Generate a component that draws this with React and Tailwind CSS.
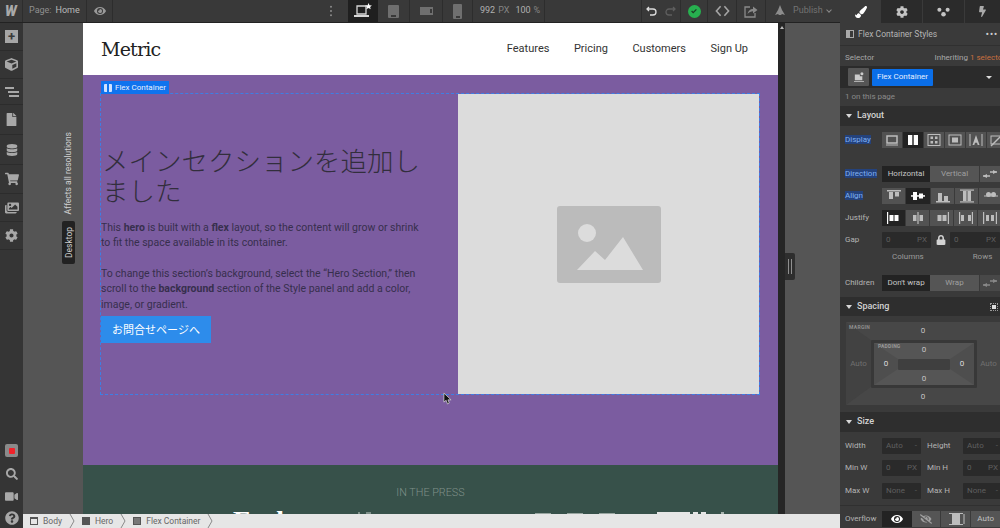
import React from "react";
import {
  FaBolt,
  FaCog,
  FaCube,
  FaDatabase,
  FaEye,
  FaEyeSlash,
  FaFile,
  FaImages,
  FaLock,
  FaPaintBrush,
  FaQuestionCircle,
  FaSearch,
  FaShoppingCart,
  FaVideo,
} from "react-icons/fa";

// little pictograms used on the style panel buttons, all on a 20x16 grid
const glyphs = {
  block: <><rect x="5" y="4" width="10" height="7" fill="none" stroke="currentColor" strokeWidth="1.5" /><rect x="4" y="12.500" width="12" height="1" fill="currentColor" /></>,
  flex: <><rect x="5" y="3" width="10" height="10" fill="currentColor" /><rect x="9.3" y="3" width="1.4" height="10" fill="#222" /></>,
  grid: <><rect x="4" y="2.5" width="12" height="11" fill="none" stroke="currentColor" /><rect x="6.5" y="4.5" width="2.5" height="2.5" fill="currentColor" /><rect x="11" y="4.5" width="2.5" height="2.5" fill="currentColor" /><rect x="6.5" y="9" width="2.5" height="2.5" fill="currentColor" /><rect x="11" y="9" width="2.5" height="2.5" fill="currentColor" /></>,
  inlineBlock: <><rect x="4" y="3" width="12" height="10" fill="none" stroke="currentColor" /><rect x="7" y="5.5" width="6" height="5" fill="currentColor" /></>,
  text: <><rect x="3.5" y="2" width="1" height="12" fill="currentColor" /><rect x="15.5" y="2" width="1" height="12" fill="currentColor" /><path d="M10 3l3.5 10h-1.800l-.7-2.200H9l-.7 2.200H6.500z" fill="currentColor" /></>,
  none: <><rect x="4" y="4" width="12" height="8" fill="none" stroke="currentColor" /><path d="M4 14L16 2" stroke="currentColor" strokeWidth="1.500" /></>,
  swap: <><path d="M3 10h7M10 6h7" stroke="currentColor" strokeWidth="1.500" /><path d="M7 12l-4-2 4-2zM13 8l4-2-4-2z" fill="currentColor" /></>,
  alignTop: <><rect x="3" y="2" width="14" height="1.500" fill="currentColor" /><rect x="5" y="4" width="4" height="7" fill="currentColor" /><rect x="11" y="4" width="4" height="4.500" fill="currentColor" /></>,
  alignCenter: <><rect x="3" y="7.200" width="14" height="1.500" fill="currentColor" /><rect x="5" y="4" width="4" height="8" fill="currentColor" /><rect x="11" y="5.500" width="4" height="5" fill="currentColor" /></>,
  alignBottom: <><rect x="3" y="13" width="14" height="1.500" fill="currentColor" /><rect x="5" y="5" width="4" height="8" fill="currentColor" /><rect x="11" y="8" width="4" height="5" fill="currentColor" /></>,
  alignStretch: <><rect x="3" y="1.500" width="14" height="1.200" fill="currentColor" /><rect x="3" y="13.300" width="14" height="1.200" fill="currentColor" /><rect x="6" y="3" width="3.500" height="10" fill="currentColor" /><rect x="10.500" y="3" width="3.500" height="10" fill="currentColor" /></>,
  alignBase: <><rect x="3" y="7.500" width="14" height="1" fill="currentColor" /><circle cx="7.500" cy="6.500" r="2.500" fill="currentColor" /><circle cx="12.500" cy="6.500" r="2.500" fill="currentColor" /></>,
  justStart: <><rect x="3" y="2" width="1.200" height="12" fill="currentColor" /><rect x="5.500" y="5" width="4" height="6" fill="currentColor" /><rect x="10.500" y="5" width="4" height="6" fill="currentColor" /></>,
  justCenter: <><rect x="9.400" y="2" width="1.200" height="12" fill="currentColor" /><rect x="5" y="5" width="3.500" height="6" fill="currentColor" /><rect x="11.500" y="5" width="3.500" height="6" fill="currentColor" /></>,
  justEnd: <><rect x="15.800" y="2" width="1.200" height="12" fill="currentColor" /><rect x="5.500" y="5" width="4" height="6" fill="currentColor" /><rect x="10.500" y="5" width="4" height="6" fill="currentColor" /></>,
  justBetween: <><rect x="3" y="2" width="1.200" height="12" fill="currentColor" /><rect x="15.800" y="2" width="1.200" height="12" fill="currentColor" /><rect x="5" y="5" width="3" height="6" fill="currentColor" /><rect x="12" y="5" width="3" height="6" fill="currentColor" /></>,
  justAround: <><rect x="3" y="2" width="1.200" height="12" fill="currentColor" /><rect x="15.800" y="2" width="1.200" height="12" fill="currentColor" /><rect x="6" y="5" width="3" height="6" fill="currentColor" /><rect x="11" y="5" width="3" height="6" fill="currentColor" /></>,
  clip: <><rect x="6" y="3" width="8" height="10" fill="currentColor" /><rect x="3" y="2" width="14" height="1" fill="currentColor" /><rect x="3" y="13" width="14" height="1" fill="currentColor" /><path d="M18 3v10" stroke="currentColor" /></>,
};

function Glyph({ name, className = "h-4 w-5" }) {
  return (
    <svg viewBox="0 0 20 16" className={className}>
      {glyphs[name]}
    </svg>
  );
}

function IconButton({ name, active, width = "w-[20px]" }) {
  return (
    <div
      className={`flex h-4 shrink-0 items-center justify-center ${width} ${
        active ? "bg-[#232323] text-white" : "bg-[#525252] text-[#bdbdbd]"
      }`}
    >
      <Glyph name={name} />
    </div>
  );
}

function Row({ label, highlight, className = "", children }) {
  return (
    <div className={`flex h-4 items-center pl-[5px] ${className}`}>
      <div className="w-[37px] shrink-0">
        <span
          className={
            highlight
              ? "bg-[#24427c] text-[#7fb0f2]"
              : "text-[#b4b4b4]"
          }
        >
          {label}
        </span>
      </div>
      {children}
    </div>
  );
}

function SectionHeader({ title, height, right }) {
  return (
    <div
      className={`flex shrink-0 items-center justify-between bg-[#2e2e2e] pl-[6px] pr-[2px] text-[9px] font-medium text-[#d2d2d2] ${height}`}
    >
      <div className="flex items-center gap-[5px]">
        <span className="h-0 w-0 border-x-[3px] border-t-[4px] border-x-transparent border-t-[#d8d8d8]" />
        {title}
      </div>
      {right}
    </div>
  );
}

function SizeInput({ value, unit, width = "w-[39px]" }) {
  return (
    <div className={`flex h-4 shrink-0 items-center justify-between rounded-[1px] bg-[#2a2a2a] px-[4px] text-[#5f5f5f] ${width}`}>
      <span>{value}</span>
      <span>{unit}</span>
    </div>
  );
}

function SizeRow({ left, right, value, unit }) {
  return (
    <div className="flex h-4 items-center pl-[5px] text-[#b4b4b4]">
      <div className="w-[37px] shrink-0">{left}</div>
      <SizeInput value={value} unit={unit} />
      <div className="ml-[6px] w-[36px] shrink-0">{right}</div>
      <SizeInput value={value} unit={unit} />
    </div>
  );
}

function TopBar() {
  return (
    <div className="flex h-[23px] shrink-0 items-stretch border-b border-[#222] bg-[#393939] text-[9px] text-[#bdbdbd]">
      <div className="flex w-[23px] items-center justify-center border-r border-[#2d2d2d] text-[14px] font-black italic text-[#a9a9a9]">
        W
      </div>
      <div className="flex w-[64px] items-center border-r border-[#2d2d2d] pl-[6px]">
        <span className="text-[#8f8f8f]">Page:</span>
        <span className="ml-[4px] text-[#b9b9b9]">Home</span>
      </div>
      <div className="flex w-[26px] items-center justify-center border-r border-[#2d2d2d] text-[#9a9a9a]">
        <FaEye size={12} />
      </div>
      <div className="flex flex-1 items-center justify-end pr-[15px] text-[#8a8a8a]">
        <svg viewBox="0 0 4 14" className="h-[12px] w-[4px]">
          <circle cx="2" cy="2" r="1.200" fill="currentColor" />
          <circle cx="2" cy="7" r="1.200" fill="currentColor" />
          <circle cx="2" cy="12" r="1.200" fill="currentColor" />
        </svg>
      </div>
      <div className="flex w-[30px] items-center justify-center bg-[#1f1f1f] text-[#d6d6d6]">
        <svg viewBox="0 0 20 16" className="h-[16px] w-[20px]">
          <path d="M4 3h9v8H4z" fill="none" stroke="currentColor" strokeWidth="1.300" />
          <rect x="1" y="12" width="15" height="2" fill="currentColor" />
          <path d="M15.500 0l1 2.200 2.400.2-1.800 1.600.6 2.300-2.200-1.200-2.100 1.200.6-2.300-1.800-1.600 2.400-.2z" fill="#fff" />
        </svg>
      </div>
      <div className="flex w-[32px] items-center justify-center border-r border-[#2d2d2d] text-[#6f6f6f]">
        <div className="flex h-[13px] w-[11px] flex-col justify-end rounded-[1px] bg-[#6f6f6f] pb-[1px]">
          <div className="mx-auto h-[2px] w-[5px] bg-[#393939]" />
        </div>
      </div>
      <div className="flex w-[33px] items-center justify-center border-r border-[#2d2d2d]">
        <div className="flex h-[8px] w-[13px] items-center justify-end bg-[#6f6f6f] pr-[1px]">
          <div className="h-[4px] w-[2px] bg-[#393939]" />
        </div>
      </div>
      <div className="flex w-[30px] items-center justify-center border-r border-[#2d2d2d]">
        <div className="flex h-[15px] w-[9px] flex-col justify-end rounded-[1px] bg-[#6f6f6f] pb-[1px]">
          <div className="mx-auto h-[2px] w-[4px] bg-[#393939]" />
        </div>
      </div>
      <div className="flex w-[72px] items-center border-r border-[#2d2d2d] pl-[7px]">
        <span className="text-[#b0b0b0]">992</span>
        <span className="ml-[3px] text-[#858585]">PX</span>
        <span className="ml-[6px] text-[#b0b0b0]">100</span>
        <span className="ml-[3px] text-[#858585]">%</span>
      </div>
      <div className="w-[96px]" />
      <div className="flex w-[40px] items-center justify-center gap-[6px] border-x border-[#2d2d2d]">
        <svg viewBox="0 0 12 10" className="h-[10px] w-[12px] text-[#dcdcdc]">
          <path d="M3 1L1 3l2 2M1 3h6a3 3 0 010 6H4" fill="none" stroke="currentColor" strokeWidth="1.300" />
        </svg>
        <svg viewBox="0 0 12 10" className="h-[10px] w-[12px] text-[#5e5e5e]">
          <path d="M9 1l2 2-2 2M11 3H5a3 3 0 000 6h3" fill="none" stroke="currentColor" strokeWidth="1.300" />
        </svg>
      </div>
      <div className="flex w-[27px] items-center justify-center border-r border-[#2d2d2d]">
        <div className="flex h-[13px] w-[13px] items-center justify-center rounded-full bg-[#27b04f]">
          <svg viewBox="0 0 10 10" className="h-[8px] w-[8px]">
            <path d="M2 5l2 2 4-4" fill="none" stroke="#1c3b24" strokeWidth="1.600" />
          </svg>
        </div>
      </div>
      <div className="flex w-[29px] items-center justify-center border-r border-[#2d2d2d] text-[#a5a5a5]">
        <svg viewBox="0 0 16 12" className="h-[12px] w-[15px]">
          <path d="M6 1L1.500 6 6 11M10 1l4.500 5L10 11" fill="none" stroke="currentColor" strokeWidth="1.700" />
        </svg>
      </div>
      <div className="flex w-[29px] items-center justify-center border-r border-[#2d2d2d] text-[#8a8a8a]">
        <svg viewBox="0 0 14 13" className="h-[13px] w-[14px]">
          <path d="M6 2H1v10h10V8" fill="none" stroke="currentColor" strokeWidth="1.300" />
          <path d="M3.500 9c.5-3 2.500-5 5.500-5V1.500L13.500 5 9 8.500V6.300c-2 0-4 1-5.500 2.700z" fill="currentColor" />
        </svg>
      </div>
      <div className="flex w-[74px] items-center pl-[8px] text-[#737373]">
        <svg viewBox="0 0 12 12" className="h-[12px] w-[12px] text-[#8c8c8c]">
          <path d="M6 0l2 5 3 5-3-1-1 1H5L4 9l-3 1 3-5z" fill="currentColor" />
        </svg>
        <span className="ml-[7px]">Publish</span>
        <span className="ml-[4px] h-[4px] w-[4px] -translate-y-[1px] rotate-45 border-b border-r border-[#8a8a8a]" />
      </div>
    </div>
  );
}

function Sidebar() {
  return (
    <div className="flex w-[23px] shrink-0 flex-col justify-between bg-[#353535] text-[#a8a8a8]">
      <div className="flex flex-col">
        <div className="flex h-[28px] items-center justify-center border-b border-[#2c2c2c]">
          <div className="flex h-[13px] w-[13px] items-center justify-center bg-[#a6a6a6] text-[13px] font-bold leading-none text-[#3a3a3a]">+</div>
        </div>
        <div className="flex h-[28px] items-center justify-center border-b border-[#2c2c2c]"><FaCube size={13} /></div>
        <div className="flex h-[26px] items-center justify-center border-b border-[#2c2c2c]">
          <svg viewBox="0 0 14 10" className="h-[10px] w-[14px]">
            <rect x="0" y="0" width="9" height="2" fill="currentColor" />
            <rect x="3" y="4" width="11" height="2" fill="currentColor" />
            <rect x="4" y="8" width="10" height="2" fill="currentColor" />
          </svg>
        </div>
        <div className="flex h-[30px] items-center justify-center border-b border-[#2c2c2c]"><FaFile size={13} /></div>
        <div className="flex h-[30px] items-center justify-center border-b border-[#2c2c2c]"><FaDatabase size={12} /></div>
        <div className="flex h-[29px] items-center justify-center border-b border-[#2c2c2c]"><FaShoppingCart size={14} /></div>
        <div className="flex h-[28px] items-center justify-center border-b border-[#2c2c2c]"><FaImages size={14} /></div>
        <div className="flex h-[28px] items-center justify-center border-b border-[#2c2c2c]"><FaCog size={13} /></div>
      </div>
      <div className="flex flex-col">
        <div className="flex h-[23px] items-center justify-center">
          <div className="flex h-[13px] w-[13px] items-center justify-center rounded-[2px] bg-[#8a8a8a]">
            <div className="h-[6px] w-[6px] rounded-[1px] bg-[#f0222a]" />
          </div>
        </div>
        <div className="flex h-[23px] items-center justify-center"><FaSearch size={12} /></div>
        <div className="flex h-[23px] items-center justify-center"><FaVideo size={13} /></div>
        <div className="flex h-[20px] items-center justify-center"><FaQuestionCircle size={14} /></div>
      </div>
    </div>
  );
}

function Hero() {
  return (
    <section className="flex flex-1 items-start bg-[#7b5ca0] pb-[71px] pl-[18px] pr-[19px] pt-[19px]">
      <div className="relative flex h-[300px] w-full items-center outline-1 outline-dashed outline-[#3d7fe6]">
        <div className="absolute -top-[13px] left-0 flex h-[13px] items-center gap-[3px] bg-[#0f73ee] px-[3px] text-[8px] text-[#e8f1ff]">
          <span className="flex h-[8px] w-[8px] justify-center rounded-[1px] bg-[#cfe2ff]">
            <span className="h-full w-[2px] bg-[#0f73ee]" />
          </span>
          Flex Container
        </div>
        <div className="w-[357px] shrink-0 text-[#372f4d]">
          <h1 className="pl-[1px] text-[26.500px] font-light leading-[30px] text-[#322e3c] [font-family:'Noto_Sans_CJK_JP',sans-serif]">
            メインセクションを追加し<br />ました
          </h1>
          <p className="mt-[15px] text-[10.500px] leading-[15.4px]">
            This <b>hero</b> is built with a <b>flex</b> layout, so the content will grow or shrink<br />
            to fit the space available in its container.<br />
            <br />
            To change this section’s background, select the “Hero Section,” then<br />
            scroll to the <b>background</b> section of the Style panel and add a color,<br />
            image, or gradient.
          </p>
          <div className="mt-[4px] flex h-[27px] w-[110px] items-center justify-center bg-[#2d8ceb] text-[11px] text-white [font-family:'Noto_Sans_CJK_JP',sans-serif]">
            お問合せページへ
          </div>
        </div>
        <div className="flex h-full flex-1 items-center justify-center bg-[#dcdcdc]">
          <svg viewBox="0 0 104 77" className="h-[77px] w-[104px]">
            <rect width="104" height="77" rx="3" fill="#bbbbbb" />
            <circle cx="30" cy="27" r="9" fill="#dcdcdc" />
            <path d="M20 64l18-19 10 9 18-23 20 33z" fill="#dcdcdc" />
          </svg>
        </div>
      </div>
    </section>
  );
}

function Press() {
  return (
    <section className="h-[49px] shrink-0 overflow-hidden bg-[#37514a]">
      <div className="pt-[21px] text-center text-[10.800px] font-light leading-[14px] text-[#7f9089]">
        IN THE PRESS
      </div>
      <div className="mt-[5px] flex items-start pl-[150px] text-white">
        <span className="w-[125px] shrink-0 text-[28px] font-bold leading-[32px] [font-family:'Liberation_Serif',serif]">Forbes</span>
        <div className="mt-[7px] flex w-[177px] shrink-0 gap-[6px]">
          <div className="h-[2px] w-[2px] bg-[#7f908a]" />
          <div className="h-[2px] w-[5px] bg-[#7f908a]" />
        </div>
        <div className="mt-[8px] flex w-[122px] shrink-0 gap-[16px]">
          <div className="h-[1px] w-[16px] bg-[#98a5a0]" />
          <div className="h-[1px] w-[16px] bg-[#98a5a0]" />
          <div className="h-[1px] w-[16px] bg-[#98a5a0]" />
        </div>
        <div className="mt-[7px] flex shrink-0 gap-[3px]">
          <div className="h-[2px] w-[33px] bg-[#e6e6e6]" />
          <div className="h-[2px] w-[5px] bg-[#e6e6e6]" />
          <div className="h-[2px] w-[5px] bg-[#e6e6e6]" />
          <div className="ml-[12px] h-[2px] w-[3px] bg-[#a8b4af]" />
        </div>
      </div>
    </section>
  );
}

function Crumb({ icon, label }) {
  return (
    <div className="flex h-full items-center">
      <span className={`ml-[7px] flex h-[8px] w-[8px] border border-[#555] ${icon}`} />
      <span className="ml-[5px] text-[#666]">{label}</span>
      <svg viewBox="0 0 6 14" className="ml-[7px] h-[14px] w-[6px]">
        <path d="M1 0l4 7-4 7" fill="none" stroke="#8a8a8a" />
      </svg>
    </div>
  );
}

function Canvas() {
  return (
    <div className="flex min-w-0 flex-1 flex-col">
      <div className="flex min-h-0 flex-1 bg-[#555555]">
        <div className="flex w-[60px] shrink-0 flex-col items-end pr-[9px] pt-[109px] text-[8.500px] text-[#d0d0d0]">
          <div className="rotate-180 leading-[12px] [writing-mode:vertical-rl]">Affects all resolutions</div>
          <div className="mr-[-1px] mt-[6px] flex h-[43px] w-[13px] rotate-180 items-center justify-center rounded-[2px] bg-[#222] leading-[12px] text-[#cfcfcf] [writing-mode:vertical-rl]">Desktop</div>
        </div>
        <div className="flex w-[695px] shrink-0 flex-col">
          <nav className="flex h-[52px] shrink-0 items-center justify-between bg-white pl-[18px] pr-[30px]">
            <div className="text-[19px] font-medium tracking-[-0.8px] text-[#222] [font-family:'DejaVu_Serif',serif]">Metric</div>
            <div className="flex gap-[24.500px] text-[11px] text-[#333]">
              <span>Features</span>
              <span>Pricing</span>
              <span>Customers</span>
              <span>Sign Up</span>
            </div>
          </nav>
          <Hero />
          <Press />
        </div>
        <div className="flex w-[7px] shrink-0 justify-center bg-[#262626] pt-[3px]">
          <div className="h-0 w-0 border-x-[2px] border-b-[3px] border-x-transparent border-b-[#bbb]" />
        </div>
        <div className="flex flex-1 items-center pb-[4px]">
          <div className="flex h-[27px] w-[10px] items-center justify-center rounded-r-[2px] bg-[#2e2e2e]">
            <div className="h-[15px] w-[4px] border-x border-[#8f8f8f]" />
          </div>
        </div>
      </div>
      <div className="flex h-[14px] shrink-0 items-center bg-[#e6e6e6] text-[8.500px]">
        <Crumb icon="border-t-2" label="Body" />
        <Crumb icon="bg-[#555]" label="Hero" />
        <Crumb icon="bg-[#777]" label="Flex Container" />
      </div>
    </div>
  );
}

function StylePanel() {
  return (
    <div className="flex h-full w-[160px] shrink-0 flex-col overflow-hidden bg-[#3a3a3a] text-[8px]">
      <div className="flex h-[23px] shrink-0 text-[#c4c4c4]">
        <div className="flex w-[41px] items-center justify-center bg-[#3a3a3a] text-white"><FaPaintBrush size={12} /></div>
        <div className="flex w-[42px] items-center justify-center border-r border-[#3a3a3a] bg-[#2b2b2b]"><FaCog size={12} /></div>
        <div className="flex w-[42px] items-center justify-center gap-[1px] border-r border-[#3a3a3a] bg-[#2b2b2b]">
          <svg viewBox="0 0 14 12" className="h-[11px] w-[13px]">
            <circle cx="2.500" cy="4" r="2.200" fill="currentColor" />
            <circle cx="11.500" cy="4" r="2.200" fill="currentColor" />
            <circle cx="7" cy="9" r="2.500" fill="currentColor" />
          </svg>
        </div>
        <div className="flex flex-1 items-center justify-center bg-[#2b2b2b] text-[#aaa]"><FaBolt size={11} /></div>
      </div>

      <div className="flex h-[22px] shrink-0 items-center pl-[6px] text-[8.500px] text-[#b4b4b4]">
        <span className="flex h-[8px] w-[8px] border border-[#aaa]"><span className="h-full w-[3px] bg-[#aaa]" /></span>
        <span className="ml-[4px]">Flex Container Styles</span>
        <span className="ml-auto mr-[2px] font-bold tracking-[1px] text-[#ccc]">•••</span>
      </div>

      <div className="flex h-[61px] shrink-0 flex-col border-t border-[#303030]">
        <div className="flex h-[20px] items-center justify-between whitespace-nowrap pl-[5px] pt-[3px] text-[#a8a8a8]">
          <span>Selector</span>
          <span className="-mr-[5px]">Inheriting <span className="text-[#c96f3f]">1 selector</span></span>
        </div>
        <div className="flex h-[22px] items-center bg-[#2b2b2b] pl-[8px]">
          <div className="flex h-[18px] w-[21px] items-center justify-center rounded-[1px] bg-[#555] text-[#ccc]">
            <svg viewBox="0 0 12 12" className="h-[10px] w-[10px]">
              <path d="M1 3h6v2h3v5H1zM0 11h12v1H0z" fill="currentColor" />
              <circle cx="9.500" cy="2" r="1.800" fill="currentColor" />
            </svg>
          </div>
          <div className="ml-[3px] flex h-[17px] w-[61px] items-center justify-center rounded-[1px] bg-[#0a6ee8] text-[8px] text-[#e5efff]">Flex Container</div>
          <span className="ml-auto mr-[8px] h-0 w-0 border-x-[3px] border-t-[3px] border-x-transparent border-t-[#ddd]" />
        </div>
        <div className="pl-[5px] pt-[3px] text-[#8a8a8a]">1 on this page</div>
      </div>

      <SectionHeader title="Layout" height="h-[20px]" />

      <div className="flex h-[171px] shrink-0 flex-col pt-[6px]">
        <Row label="Display" highlight>
          <div className="flex gap-[1px]">
            <IconButton name="block" />
            <IconButton name="flex" active />
            <IconButton name="grid" />
            <IconButton name="inlineBlock" />
            <IconButton name="text" />
            <IconButton name="none" />
          </div>
        </Row>
        <Row label="Direction" highlight className="mt-[18px]">
          <div className="flex h-4 w-[51px] items-center justify-center bg-[#232323] text-[#c6c6c6]">Horizontal</div>
          <div className="flex h-4 w-[52px] items-center justify-center bg-[#555] text-[#a0a0a0]">Vertical</div>
          <div className="ml-[1px]"><IconButton name="swap" /></div>
        </Row>
        <Row label="Align" highlight className="mt-[6px]">
          <div className="flex gap-[1px]">
            <IconButton name="alignTop" width="w-[23px]" />
            <IconButton name="alignCenter" active width="w-[24px]" />
            <IconButton name="alignBottom" width="w-[23px]" />
            <IconButton name="alignStretch" width="w-[23px]" />
            <IconButton name="alignBase" width="w-[23px]" />
          </div>
        </Row>
        <Row label="Justify" className="mt-[6px]">
          <div className="flex gap-[1px]">
            <IconButton name="justStart" active width="w-[23px]" />
            <IconButton name="justCenter" width="w-[23px]" />
            <IconButton name="justEnd" width="w-[23px]" />
            <IconButton name="justBetween" width="w-[23px]" />
            <IconButton name="justAround" width="w-[23px]" />
          </div>
        </Row>
        <Row label="Gap" className="mt-[6px]">
          <SizeInput value="0" unit="PX" width="w-[49px]" />
          <div className="flex w-[22px] justify-center text-[#d4d4d4]"><FaLock size={10} /></div>
          <SizeInput value="0" unit="PX" width="w-[50px]" />
        </Row>
        <div className="mt-[4px] flex h-[10px] items-center text-[#9a9a9a]">
          <span className="ml-[52px]">Columns</span>
          <span className="ml-[49px]">Rows</span>
        </div>
        <Row label="Children" className="mt-[13px]">
          <div className="flex h-4 w-[51px] items-center justify-center bg-[#232323] text-[#c6c6c6]">Don't wrap</div>
          <div className="flex h-4 w-[52px] items-center justify-center bg-[#555] text-[#a0a0a0]">Wrap</div>
          <div className="ml-[1px] opacity-60"><IconButton name="swap" /></div>
        </Row>
      </div>

      <SectionHeader
        title="Spacing"
        height="h-[19px]"
        right={<span className="flex h-[8px] w-[8px] items-center justify-center border border-dotted border-[#999]"><span className="h-[4px] w-[4px] bg-[#ddd]" /></span>}
      />

      <div className="flex h-[96px] shrink-0 pl-[6px] pt-[6px]">
        <div className="relative flex h-[83px] w-[164px] shrink-0 flex-col items-stretch rounded-[1px] bg-[#474747] text-[#c6c6c6]">
          <div className="absolute left-0 top-0 h-full w-[25px] bg-[#424242] [clip-path:polygon(0_0,100%_22%,100%_78%,0_100%)]" />
          <span className="absolute left-[3px] top-[2px] text-[5px] font-bold tracking-[0.3px] text-[#8f8f8f]">MARGIN</span>
          <div className="relative flex h-[18px] w-[154px] items-center justify-center">0</div>
          <div className="relative flex h-[48px]">
            <div className="flex w-[25px] items-center justify-center text-[#6f6f6f]">Auto</div>
            <div className="relative flex w-[106px] flex-col rounded-[1px] border-[3px] border-[#383838] bg-[#555]">
              <div className="absolute left-0 top-0 h-full w-[24px] bg-[#4e4e4e] [clip-path:polygon(0_0,100%_38%,100%_62%,0_100%)]" />
              <div className="absolute right-0 top-0 h-full w-[24px] bg-[#4e4e4e] [clip-path:polygon(100%_0,0_38%,0_62%,100%_100%)]" />
              <span className="absolute left-[4px] top-0 text-[5px] font-bold tracking-[0.2px] text-[#9a9a9a]">PADDING</span>
              <div className="relative flex h-[13px] items-center justify-center">0</div>
              <div className="relative flex h-[16px] items-center">
                <span className="w-[24px] text-center text-[#dedede]">0</span>
                <div className="h-[11px] flex-1 rounded-[1px] bg-[#3f3f3f]" />
                <span className="w-[24px] text-center text-[#dedede]">0</span>
              </div>
              <div className="relative flex h-[13px] items-center justify-center">0</div>
            </div>
            <div className="flex w-[23px] items-center justify-center text-[#6f6f6f]">Auto</div>
          </div>
          <div className="relative flex h-[17px] w-[154px] items-center justify-center">0</div>
        </div>
      </div>

      <SectionHeader title="Size" height="h-[20px]" />

      <div className="flex flex-1 flex-col pt-[6px]">
        <SizeRow left="Width" right="Height" value="Auto" unit="-" />
        <div className="mt-[6px]"><SizeRow left="Min W" right="Min H" value="0" unit="PX" /></div>
        <div className="mt-[7px]"><SizeRow left="Max W" right="Max H" value="None" unit="-" /></div>
        <div className="mt-[6px] border-t border-[#303030] pt-[5px]">
          <Row label="Overflow">
            <div className="flex w-[31px] justify-center bg-[#232323] py-[2px] text-white"><FaEye size={12} /></div>
            <div className="flex w-[30px] justify-center bg-[#555] py-[2px] text-[#a0a0a0]"><FaEyeSlash size={12} /></div>
            <div className="ml-[1px]"><IconButton name="clip" width="w-[29px]" /></div>
            <div className="ml-[1px] flex h-4 w-[30px] items-center justify-center bg-[#555] text-[#c0c0c0]">Auto</div>
          </Row>
        </div>
      </div>
    </div>
  );
}

export default function App() {
  return (
    <div className="flex h-[528px] w-[1000px] overflow-hidden bg-[#3a3a3a] [font-family:Roboto,sans-serif]">
      <div className="flex w-[840px] shrink-0 flex-col">
        <TopBar />
        <div className="flex min-h-0 flex-1">
          <Sidebar />
          <Canvas />
        </div>
      </div>
      <StylePanel />
      {/* mouse pointer sitting on the bottom edge of the flex container */}
      <svg viewBox="0 0 10 14" className="absolute left-[443px] top-[392px] h-[13px] w-[9px]">
        <path d="M1 1v10l2.500-2 1.500 4 2-1-1.500-3.500H9z" fill="#111" stroke="#ddd" strokeWidth="0.800" />
      </svg>
    </div>
  );
}
